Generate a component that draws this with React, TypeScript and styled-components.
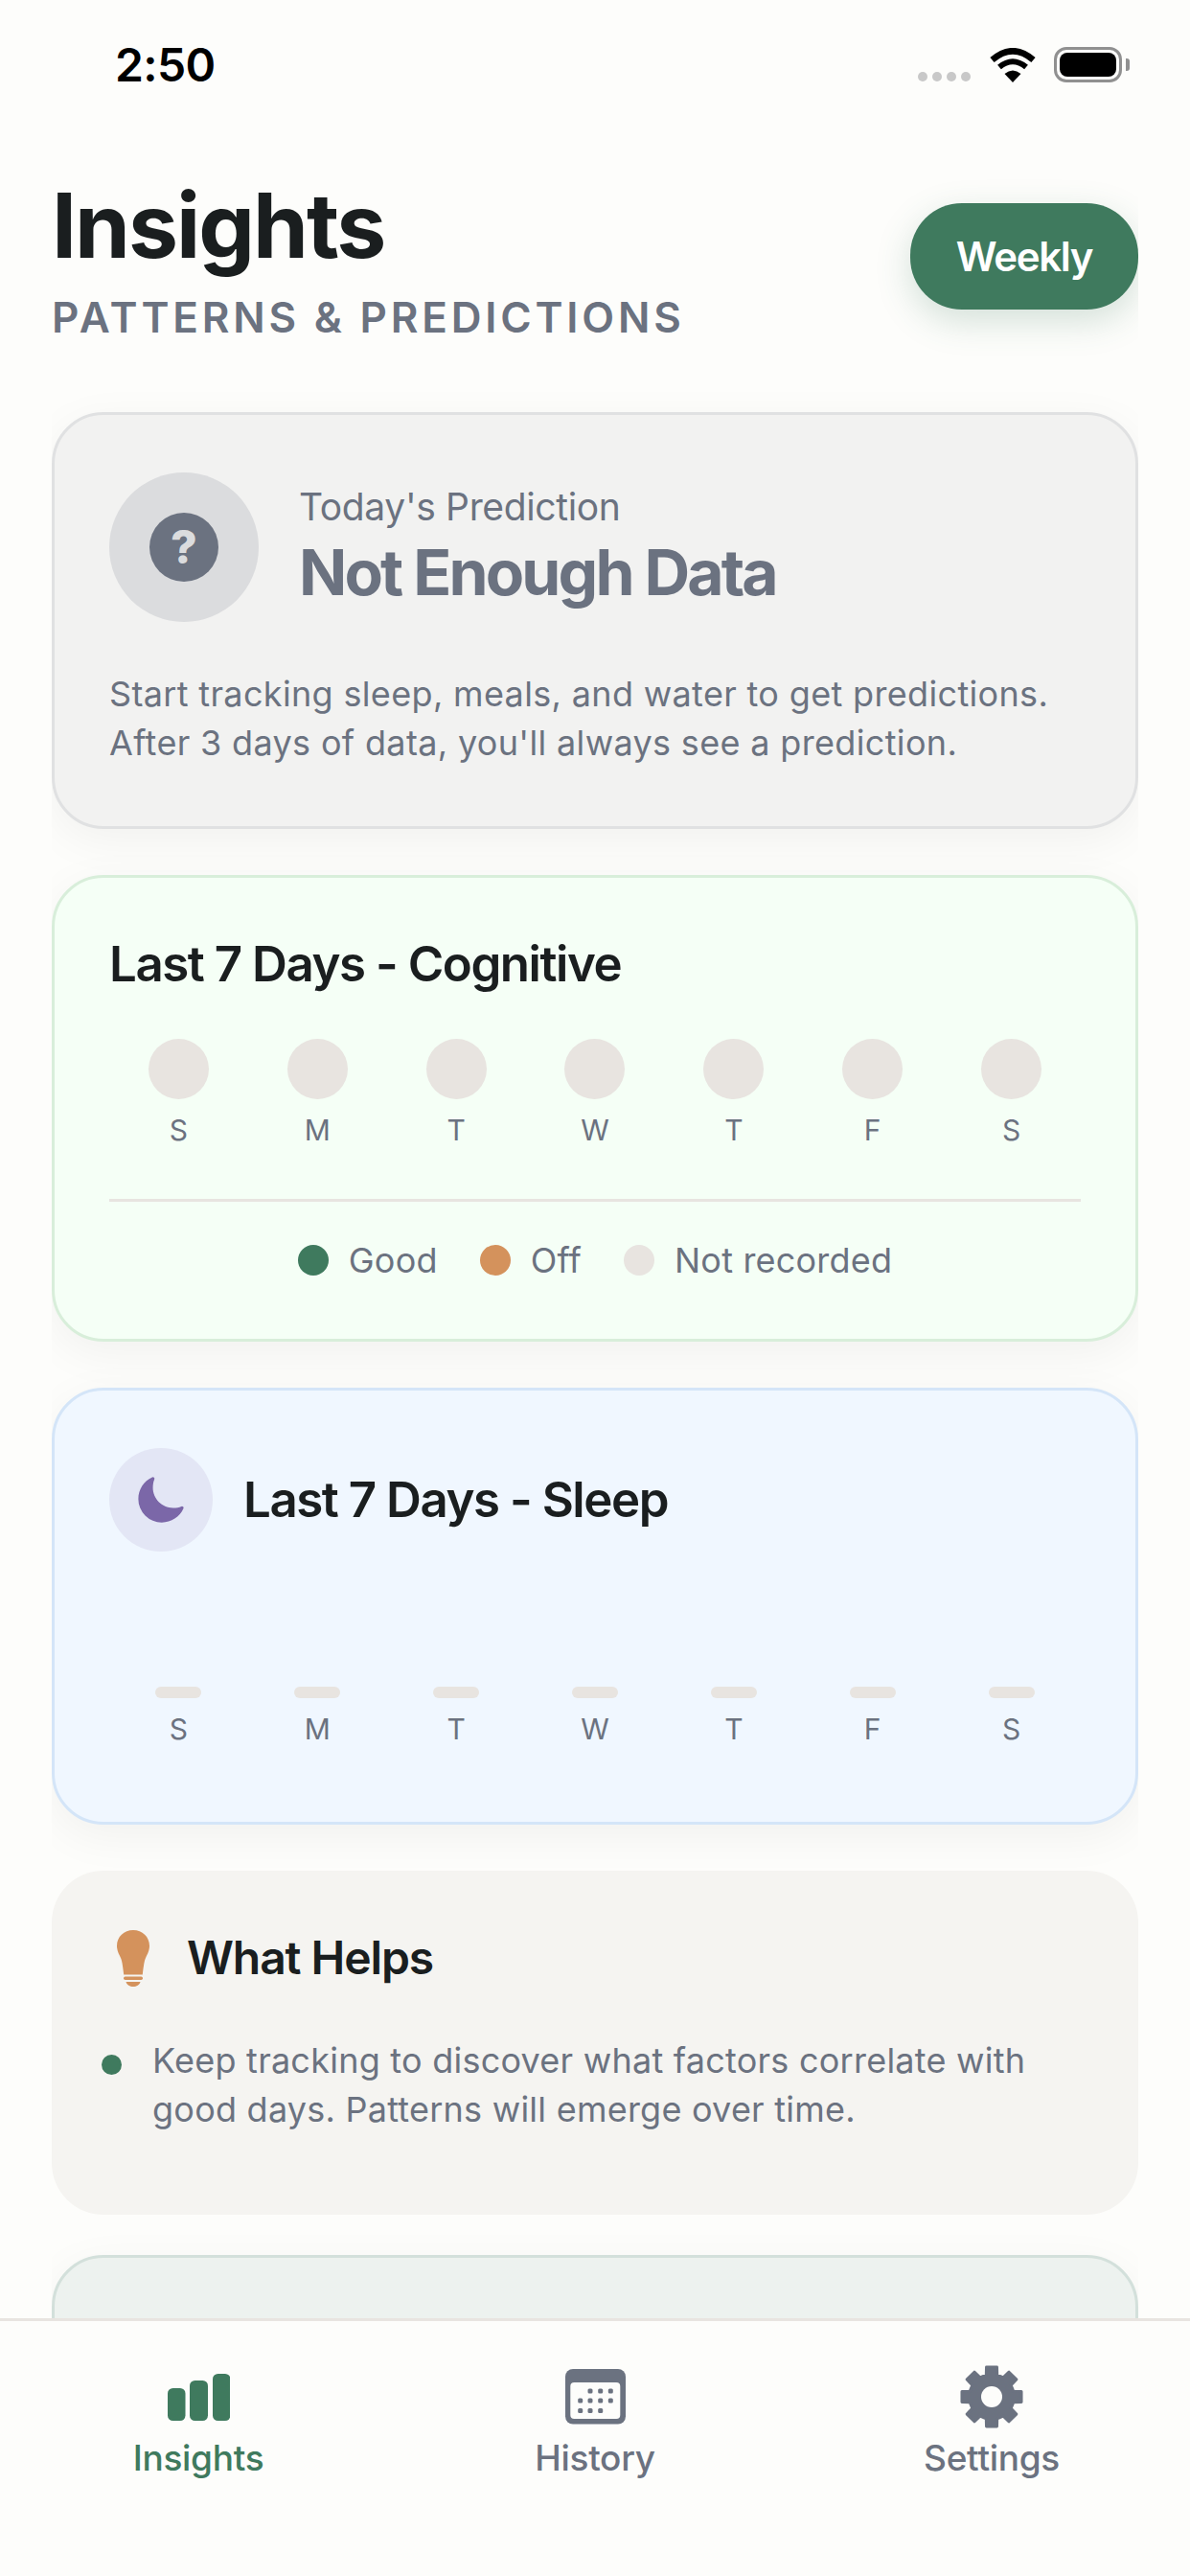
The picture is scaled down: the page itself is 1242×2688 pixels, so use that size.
import React from 'react';
import styled, { createGlobalStyle } from 'styled-components';
import { IoMoon } from 'react-icons/io5';

const Global = createGlobalStyle`
  html, body { margin: 0; padding: 0; background: #fdfdfb; }
  * { box-sizing: border-box; }
`;

const GREEN = '#3f7a5e';
const ORANGE = '#d4925c';
const GREY = '#6b7280';
const INK = '#1a1e1f';
const MUTE = '#e8e4e0';

const Screen = styled.div`
  width: 1242px;
  height: 2688px;
  display: flex;
  flex-direction: column;
  overflow: hidden;
  background: #fdfdfb;
  font-family: Inter, 'Liberation Sans', sans-serif;
`;

const StatusBar = styled.div`
  height: 132px;
  flex: none;
  display: flex;
  justify-content: space-between;
  align-items: flex-start;
  padding: 49px 71px 0 120px;
`;

const Clock = styled.div`
  font-size: 48px;
  line-height: 37px;
  font-weight: 600;
  letter-spacing: -0.6px;
  color: #000;
`;

const StatusIcons = styled.div`
  display: flex;
  align-items: flex-end;
`;

const Signal = styled.div`
  display: flex;
  gap: 5px;
  margin: 0 20px 1px 0;
`;

const SignalDot = styled.span`
  width: 10px;
  height: 10px;
  border-radius: 50%;
  background: #c8c8c8;
`;

const Battery = styled.div`
  width: 71px;
  height: 37px;
  margin-left: 19px;
  padding: 3px;
  border: 3px solid #909090;
  border-radius: 13px;
  position: relative;
  &::after {
    content: '';
    position: absolute;
    right: -11px;
    top: 9px;
    width: 4px;
    height: 13px;
    border-radius: 0 3px 3px 0;
    background: #909090;
  }
`;

const BatteryFill = styled.div`
  width: 100%;
  height: 100%;
  border-radius: 8px;
  background: #000;
`;

const Scroll = styled.main`
  flex: 1;
  min-height: 0;
  margin: 0 54px;
  overflow: hidden;
`;

const Header = styled.header`
  display: flex;
  justify-content: space-between;
  align-items: flex-start;
  height: 298px;
`;

const TitleBlock = styled.div`
  padding-top: 47px;
`;

const Title = styled.h1`
  margin: 0;
  font-size: 93px;
  line-height: 112px;
  font-weight: 700;
  letter-spacing: -2px;
  color: ${INK};
`;

const Subtitle = styled.div`
  margin-top: 15px;
  font-size: 44px;
  line-height: 50px;
  font-weight: 600;
  letter-spacing: 3.8px;
  color: ${GREY};
`;

const WeeklyButton = styled.button`
  width: 238px;
  height: 111px;
  margin-top: 80px;
  border: 0;
  border-radius: 54px;
  background: ${GREEN};
  color: #fff;
  font: 600 42px Inter, sans-serif;
  letter-spacing: -1.3px;
  box-shadow: 0 12px 36px rgba(63, 122, 94, 0.22);
`;

const tones = {
  grey: { bg: '#f2f2f1', line: '#e0e1e2' },
  green: { bg: '#f5fff6', line: '#d8eeda' },
  blue: { bg: '#f0f7ff', line: '#d4e5f8' },
  sage: { bg: '#edf2ef', line: '#d3e0db' },
};

const Card = styled.section<{ $tone: keyof typeof tones; $height: number }>`
  height: ${(p) => p.$height}px;
  margin-bottom: 48px;
  padding: 60px 57px;
  border: 3px solid ${(p) => tones[p.$tone].line};
  border-radius: 54px;
  background: ${(p) => tones[p.$tone].bg};
  box-shadow: 0 12px 48px rgba(0, 0, 0, 0.05);
`;

const PlainCard = styled.section`
  height: 359px;
  margin-bottom: 42px;
  padding: 61px 52px 0;
  border-radius: 54px;
  background: #f5f4f1;
`;

const PredictionRow = styled.div`
  display: flex;
  align-items: center;
  gap: 42px;
  margin-bottom: 50px;
`;

const PredictionBadge = styled.div`
  width: 156px;
  height: 156px;
  flex: none;
  display: flex;
  align-items: center;
  justify-content: center;
  border-radius: 50%;
  background: #dbdcde;
`;

const QuestionDot = styled.div`
  width: 72px;
  height: 72px;
  display: flex;
  align-items: center;
  justify-content: center;
  border-radius: 50%;
  background: ${GREY};
  color: #dbdcde;
  font-size: 48px;
  font-weight: 800;
  line-height: 1;
`;

const PredictionLabel = styled.div`
  font-size: 39px;
  line-height: 47px;
  color: ${GREY};
  letter-spacing: -0.35px;
`;

const PredictionValue = styled.div`
  margin-top: 5px;
  font-size: 66px;
  line-height: 80px;
  font-weight: 700;
  letter-spacing: -2.85px;
  color: ${GREY};
`;

const Body = styled.p`
  margin: 0;
  font-size: 36px;
  line-height: 51px;
  letter-spacing: 0.34px;
  color: ${GREY};
`;

const TipText = styled(Body)`
  letter-spacing: 0.24px;
`;

const CardTitle = styled.h2`
  margin: 0;
  font-size: 51px;
  line-height: 60px;
  font-weight: 600;
  letter-spacing: -1.45px;
  color: ${INK};
`;

const HelpsTitle = styled(CardTitle)`
  font-size: 48px;
  letter-spacing: -1.1px;
`;

const DayGrid = styled.div<{ $top: number }>`
  display: grid;
  grid-template-columns: repeat(7, 1fr);
  margin-top: ${(p) => p.$top}px;
`;

const Day = styled.div`
  display: flex;
  flex-direction: column;
  align-items: center;
`;

const DayDot = styled.div`
  width: 63px;
  height: 63px;
  border-radius: 50%;
  background: ${MUTE};
`;

const DayBar = styled.div`
  width: 48px;
  height: 12px;
  border-radius: 6px;
  background: ${MUTE};
`;

const DayLabel = styled.div`
  margin-top: 14px;
  font-size: 30px;
  line-height: 36px;
  color: ${GREY};
`;

const Legend = styled.div`
  display: flex;
  justify-content: center;
  align-items: center;
  gap: 44px;
  margin-top: 54px;
  padding-top: 39px;
  border-top: 3px solid ${MUTE};
`;

const LegendItem = styled.div`
  display: flex;
  align-items: center;
  gap: 21px;
  font-size: 36px;
  line-height: 44px;
  letter-spacing: 0.2px;
  color: ${GREY};
`;

const LegendDot = styled.span<{ $color: string }>`
  width: 32px;
  height: 32px;
  border-radius: 50%;
  background: ${(p) => p.$color};
`;

const SleepHeader = styled.div`
  display: flex;
  align-items: center;
  gap: 32px;
`;

const MoonBadge = styled.div`
  width: 108px;
  height: 108px;
  display: flex;
  align-items: center;
  justify-content: center;
  border-radius: 50%;
  background: #e3e6f5;
  color: #7b67a8;
`;

const HelpsHeader = styled.div`
  display: flex;
  align-items: center;
  gap: 39px;
  padding-left: 16px;
`;

const Tip = styled.div`
  display: flex;
  gap: 32px;
  margin-top: 52px;
`;

const TipDot = styled.span`
  width: 21px;
  height: 21px;
  flex: none;
  margin-top: 19px;
  border-radius: 50%;
  background: ${GREEN};
`;

const TabBar = styled.nav`
  height: 269px;
  flex: none;
  display: grid;
  grid-template-columns: repeat(3, 1fr);
  border-top: 3px solid ${MUTE};
  background: #fdfdfb;
`;

const Tab = styled.div<{ $active?: boolean }>`
  display: flex;
  flex-direction: column;
  align-items: center;
  padding-top: 46px;
  font-size: 37px;
  font-weight: 500;
  letter-spacing: -0.3px;
  color: ${(p) => (p.$active ? GREEN : GREY)};
`;

const TabIcon = styled.div`
  height: 66px;
  display: flex;
  align-items: center;
  justify-content: center;
`;

const TabLabel = styled.div`
  margin-top: 8px;
  line-height: 46px;
`;

const polar = (r: number, deg: number) => {
  const a = ((deg - 90) * Math.PI) / 180;
  return `${(33 + r * Math.cos(a)).toFixed(2)} ${(33 + r * Math.sin(a)).toFixed(2)}`;
};

const gearPath = (() => {
  let d = '';
  for (let i = 0; i < 8; i++) {
    const c = i * 45;
    d += `${i === 0 ? 'M' : 'L'}${polar(23.5, c - 14)} L${polar(31.5, c - 10)} L${polar(31.5, c + 10)} L${polar(23.5, c + 14)} `;
  }
  return `${d}Z`;
})();

const Wifi = () => (
  <svg width="48" height="36" viewBox="0 0 48 36">
    <path d="M24 36 L15.5 27 Q24 20 32.5 27 Z" fill="#000" />
    <path d="M10 20 Q24 8.5 38 20" fill="none" stroke="#000" strokeWidth="6" />
    <path d="M2.5 12.5 Q24 -6 45.5 12.5" fill="none" stroke="#000" strokeWidth="6.5" />
  </svg>
);

const Bars = () => (
  <svg width="65" height="49" viewBox="0 0 65 49" fill={GREEN}>
    <rect x="0" y="15" width="18.5" height="34" rx="5.5" />
    <rect x="23" y="7" width="19" height="42" rx="5.5" />
    <rect x="47" y="0" width="18.5" height="49" rx="5.5" />
  </svg>
);

const Calendar = () => (
  <svg width="63" height="58" viewBox="0 0 63 58">
    <rect width="63" height="57.500" rx="8" fill={GREY} />
    <rect x="5.300" y="14" width="52" height="38" rx="4" fill="#fdfdfb" />
    {[
      [26, 23], [36.7, 23], [47.3, 23],
      [15.7, 33], [26, 33], [36.7, 33], [47.3, 33],
      [15.7, 43.4], [26, 43.4], [36.7, 43.4],
    ].map(([x, y]) => (
      <rect key={`${x}-${y}`} x={x - 2.5} y={y - 2.5} width="5" height="5" rx="1.500" fill={GREY} />
    ))}
  </svg>
);

const Gear = () => (
  <svg width="66" height="66" viewBox="0 0 66 66">
    <path d={gearPath} fill={GREY} stroke={GREY} strokeWidth="3" strokeLinejoin="round" />
    <circle cx="33" cy="33" r="11" fill="#fdfdfb" />
  </svg>
);

const Bulb = () => (
  <svg width="34" height="59" viewBox="0 0 34 59" fill={ORANGE}>
    <path d="M17 0C26.500 0 34 7 34 16.500C34 22 31.500 25.500 29.800 29.500C28.300 33 27.600 40 26.800 46.500H7.200C6.400 40 5.700 33 4.200 29.500C2.500 25.500 0 22 0 16.500C0 7 7.500 0 17 0Z" />
    <rect x="7" y="48.500" width="20" height="3.500" rx="1.700" />
    <path d="M9.500 54H24.500C23.500 57.500 20.500 59 17 59C13.500 59 10.500 57.500 9.500 54Z" />
  </svg>
);

const DAYS = ['S', 'M', 'T', 'W', 'T', 'F', 'S'];

export default function App() {
  return (
    <Screen>
      <Global />
      <StatusBar>
        <Clock>2:50</Clock>
        <StatusIcons>
          <Signal>
            <SignalDot />
            <SignalDot />
            <SignalDot />
            <SignalDot />
          </Signal>
          <Wifi />
          <Battery>
            <BatteryFill />
          </Battery>
        </StatusIcons>
      </StatusBar>
      <Scroll>
        <Header>
          <TitleBlock>
            <Title>Insights</Title>
            <Subtitle>PATTERNS &amp; PREDICTIONS</Subtitle>
          </TitleBlock>
          <WeeklyButton>Weekly</WeeklyButton>
        </Header>

        <Card $tone="grey" $height={435}>
          <PredictionRow>
            <PredictionBadge>
              <QuestionDot>?</QuestionDot>
            </PredictionBadge>
            <div>
              <PredictionLabel>Today's Prediction</PredictionLabel>
              <PredictionValue>Not Enough Data</PredictionValue>
            </div>
          </PredictionRow>
          <Body>
            Start tracking sleep, meals, and water to get predictions.
            <br />
            After 3 days of data, you'll always see a prediction.
          </Body>
        </Card>

        <Card $tone="green" $height={487}>
          <CardTitle>Last 7 Days - Cognitive</CardTitle>
          <DayGrid $top={48}>
            {DAYS.map((d, i) => (
              <Day key={i}>
                <DayDot />
                <DayLabel>{d}</DayLabel>
              </Day>
            ))}
          </DayGrid>
          <Legend>
            <LegendItem>
              <LegendDot $color={GREEN} />
              Good
            </LegendItem>
            <LegendItem>
              <LegendDot $color={ORANGE} />
              Off
            </LegendItem>
            <LegendItem>
              <LegendDot $color={MUTE} />
              Not recorded
            </LegendItem>
          </Legend>
        </Card>

        <Card $tone="blue" $height={456}>
          <SleepHeader>
            <MoonBadge>
              <IoMoon size={54} />
            </MoonBadge>
            <CardTitle>Last 7 Days - Sleep</CardTitle>
          </SleepHeader>
          <DayGrid $top={141}>
            {DAYS.map((d, i) => (
              <Day key={i}>
                <DayBar />
                <DayLabel>{d}</DayLabel>
              </Day>
            ))}
          </DayGrid>
        </Card>

        <PlainCard>
          <HelpsHeader>
            <Bulb />
            <HelpsTitle>What Helps</HelpsTitle>
          </HelpsHeader>
          <Tip>
            <TipDot />
            <TipText>
              Keep tracking to discover what factors correlate with good days. Patterns will emerge over time.
            </TipText>
          </Tip>
        </PlainCard>

        <Card $tone="sage" $height={300} />
      </Scroll>
      <TabBar>
        <Tab $active>
          <TabIcon>
            <Bars />
          </TabIcon>
          <TabLabel>Insights</TabLabel>
        </Tab>
        <Tab>
          <TabIcon>
            <Calendar />
          </TabIcon>
          <TabLabel>History</TabLabel>
        </Tab>
        <Tab>
          <TabIcon>
            <Gear />
          </TabIcon>
          <TabLabel>Settings</TabLabel>
        </Tab>
      </TabBar>
    </Screen>
  );
}
